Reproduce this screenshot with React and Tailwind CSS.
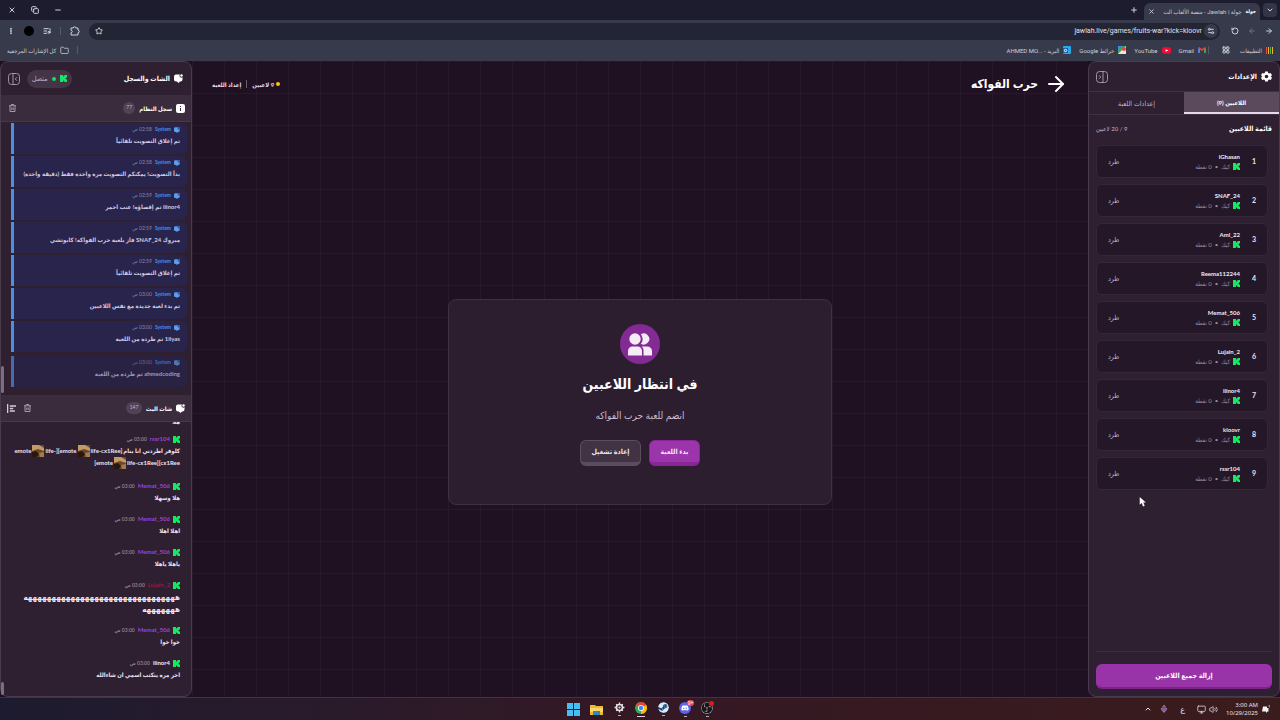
import {
  ArrowLeft,
  ArrowRight,
  ChevronDown,
  ChevronUp,
  Copy,
  EllipsisVertical,
  Folder,
  LayoutGrid,
  ListMusic,
  Mic,
  Minus,
  Monitor,
  Plus,
  RotateCw,
  Settings2,
  Star,
  Volume2,
  X,
} from "lucide-react";
import { FaDiscord, FaSteam } from "react-icons/fa";
import { SiObsstudio } from "react-icons/si";

const players = ["iGhasan", "SNAF_24", "Aml_22", "Reema112244", "Memat_506", "Lujain_2", "iiinor4", "kloovr", "rssr104"];

const systemLog = [
  { time: "02:58", text: "تم إغلاق التصويت تلقائياً" },
  { time: "02:58", text: "بدأ التصويت! يمكنكم التصويت مرة واحدة فقط (دقيقة واحدة)" },
  { time: "02:59", text: "iiinor4 تم إقصاؤه! عنب احمر" },
  { time: "02:59", text: "مبروك SNAF_24 فاز بلعبة حرب الفواكه! كابوتشي" },
  { time: "02:59", text: "تم إغلاق التصويت تلقائياً" },
  { time: "03:00", text: "تم بدء لعبة جديدة مع نفس اللاعبين" },
  { time: "03:00", text: "1ilyas تم طرده من اللعبة" },
];

const chat = [
  { name: "Memat_506", color: "text-[#9a42d8]", lines: ["هلا وسهلا"] },
  { name: "Memat_506", color: "text-[#9a42d8]", lines: ["اهلا اهلا"] },
  { name: "Memat_506", color: "text-[#9a42d8]", lines: ["ياهلا ياهلا"] },
  {
    name: "Lujain_2",
    color: "text-[#a01440]",
    lines: ["ههههههههههههههههههههههههههههههههه", "هههههههه"],
    size: "text-[8px]",
  },
  { name: "Memat_506", color: "text-[#9a42d8]", lines: ["خوا خوا"] },
  { name: "iiinor4", color: "text-[#f3e6f3]", lines: ["اخر مره ينكتب اسمي ان شاءالله"] },
];

const KickIcon = () => (
  <svg viewBox="0 0 14 14" className="size-[7px] shrink-0" fill="#17e862" aria-hidden="true">
    <path d="M0 0h6v3h1.500V1.500H9V0h5v5h-2v1.500h-1.500v1H12V9h2v5H9v-1.500H7.500V11H6v3H0z" />
  </svg>
);

const ChatIcon = ({ className }) => (
  <svg viewBox="0 0 18 18" className={`shrink-0 ${className}`} fill="currentColor" aria-hidden="true">
    <path d="M4 1h8a3.500 3.500 0 0 0 5 5v5a4 4 0 0 1-4 4h-1l-3 3-3-3H4a4 4 0 0 1-4-4V5a4 4 0 0 1 4-4z" />
    <circle cx="15" cy="3" r="2.500" />
  </svg>
);

const InfoIcon = () => (
  <svg viewBox="0 0 18 18" className="size-[9px] shrink-0" aria-hidden="true">
    <rect width="18" height="18" rx="4" fill="#fff" />
    <path d="M9 8v6M9 4v2" stroke="#3a2a3c" strokeWidth="2" />
  </svg>
);

const TrashIcon = () => (
  <svg viewBox="0 0 14 16" className="h-2 w-[7px]" fill="none" stroke="#a999aa" strokeWidth="2" aria-hidden="true">
    <path d="M0 3.500h14M4.500 3V1h5v2M2 4v11h10V4M5.500 7v5M8.500 7v5" />
  </svg>
);

const GearIcon = () => (
  <svg viewBox="0 0 24 24" className="size-[11px] shrink-0" fill="#fff" aria-hidden="true">
    <path
      fillRule="evenodd"
      d="M9 1h6l.7 3.500 2 1.200L21.200 4.500l2.800 5-2.700 2.400v.2l2.700 2.400-2.800 5-3.500-1.200-2 1.200L15 23H9l-.7-3.500-2-1.200-3.500 1.200-2.800-5 2.700-2.400v-.2L0 9.500l2.800-5 3.500 1.200 2-1.200zM12 8a4 4 0 1 0 0 8 4 4 0 0 0 0-8z"
    />
  </svg>
);

const PuzzleIcon = () => (
  <svg viewBox="0 0 20 20" className="size-[10px]" fill="none" stroke="currentColor" strokeWidth="2" aria-hidden="true">
    <path d="M2 4h4.500a2.500 2.500 0 0 1 5 0H16v4.500a2.500 2.500 0 0 1 0 5V18H2v-4.500a2.500 2.500 0 0 0 0-5z" />
  </svg>
);

const PanelIcon = ({ flip }) => (
  <svg
    viewBox="0 0 24 24"
    className={`size-3 ${flip ? "-scale-x-100" : ""}`}
    fill="none"
    stroke="#a493a6"
    strokeWidth="2"
    aria-hidden="true"
  >
    <rect x="1" y="1" width="22" height="22" rx="6" />
    <path d="M10 1v22M18 8.500 14.500 12l3.500 3.500" />
  </svg>
);

const UsersIcon = () => (
  <svg viewBox="0 0 24 23" className="h-[23px] w-6" fill="#f6ecf8" aria-hidden="true">
    <circle cx="7" cy="6" r="5.700" />
    <path d="M12.800 1.200a5.600 5.600 0 1 1 0 9.600 7 7 0 0 0 0-9.600z" />
    <path d="M0 22.500V18a4.500 4.500 0 0 1 4.500-4.500h5A4.500 4.500 0 0 1 14 18v4.500z" />
    <path d="M13.800 13.500H19A5 5 0 0 1 24 18v4.500h-8.500V18a6 6 0 0 0-1.700-4.500z" />
  </svg>
);

const Emote = () => (
  <svg viewBox="0 0 12 12" className="size-3 shrink-0" role="img" aria-label="emote">
    <rect width="12" height="12" fill="#6e4727" />
    <path d="M0 0h7l5 3v3L6 4 0 6z" fill="#c49a68" />
    <path d="M0 7l4-1 3 3-2 3H0z" fill="#281910" />
    <path d="M7 8l5-1v5H8z" fill="#a8794a" />
  </svg>
);

const Browser = () => (
  <header className="shrink-0 font-['Roboto','DejaVu_Sans_Condensed','DejaVu_Sans',sans-serif] text-[#cdd0dc]">
    <div className="flex h-5 items-end bg-[#1d1c2e] pr-[3px] pl-2">
      <button aria-label="البحث في علامات التبويب" className="mb-[3px] flex size-[14px] items-center justify-center rounded bg-[#343547]">
        <ChevronDown className="size-2" strokeWidth={3} />
      </button>
      <div className="mr-[3px] flex h-[17px] w-[116px] items-center gap-1 rounded-t-md bg-[#373a4b] px-1">
        <span className="text-[5px] font-bold text-white">جولة</span>
        <span className="flex-1 text-[6px] whitespace-nowrap">جولة | Jawlah - منصة الألعاب الت</span>
        <button aria-label="إغلاق علامة التبويب"><X className="size-[7px]" strokeWidth={3} /></button>
      </div>
      <button aria-label="علامة تبويب جديدة" className="mr-[6px] mb-[6px]"><Plus className="size-2" strokeWidth={3} /></button>
      <div className="mr-auto mb-[6px] flex items-center gap-[15px]">
        <button aria-label="تصغير"><Minus className="size-2" strokeWidth={3} /></button>
        <button aria-label="استعادة"><Copy className="size-2 -scale-x-100 -rotate-90" strokeWidth={3} /></button>
        <button aria-label="إغلاق"><X className="size-2" strokeWidth={3} /></button>
      </div>
    </div>
    <div className="flex h-[22px] items-center gap-[9px] bg-[#373a4b] px-[7px]">
      <button aria-label="رجوع"><ArrowRight className="size-2" strokeWidth={3} /></button>
      <button aria-label="التالي" className="text-[#6d7080]"><ArrowLeft className="size-2" strokeWidth={3} /></button>
      <button aria-label="إعادة تحميل"><RotateCw className="size-2 -scale-x-100" strokeWidth={3} /></button>
      <div className="mr-[2px] flex h-[17px] flex-1 items-center rounded-full bg-[#232434] pr-[2px] pl-[6px]">
        <span className="flex size-[14px] items-center justify-center rounded-full bg-[#373a4b]">
          <Settings2 className="size-2" strokeWidth={3} />
        </span>
        <input
          dir="ltr"
          aria-label="شريط العناوين"
          defaultValue="jawlah.live/games/fruits-war?kick=kloovr"
          className="mr-[2px] min-w-0 flex-1 bg-transparent text-right text-[7px] text-[#e2e3ec] outline-none"
        />
        <button aria-label="إضافة إشارة"><Star className="size-2" strokeWidth={3} /></button>
      </div>
      <button aria-label="الإضافات"><PuzzleIcon /></button>
      <span className="h-2 w-px bg-[#575a6b]" />
      <button aria-label="الوسائط"><ListMusic className="size-2" strokeWidth={3} /></button>
      <button aria-label="الملف الشخصي" className="size-[10px] rounded-full bg-black" />
      <button aria-label="القائمة"><EllipsisVertical className="size-2" strokeWidth={4} /></button>
    </div>
    <nav className="flex h-[19px] items-center bg-[#373a4b] px-[7px] pb-[3px] text-[6px] whitespace-nowrap">
      <a href="#apps" className="flex items-center gap-1">
        <svg viewBox="0 0 7 7" className="size-[7px]" aria-hidden="true">
          <path d="M0 0h1v7H0z" fill="#e94b3c" />
          <path d="M2 0h1v7H2zM6 0h1v7H6z" fill="#f0b429" />
          <path d="M4 0h1v7H4z" fill="#4caf50" />
        </svg>
        التطبيقات
      </a>
      <button aria-label="مجموعات علامات التبويب" className="mr-[10px]"><LayoutGrid className="size-2" strokeWidth={3} /></button>
      <span className="mr-[13px] h-2 w-px bg-[#575a6b]" />
      <a href="#gmail" className="mr-[2px] flex items-center gap-1">
        <svg viewBox="0 0 8 6" className="h-[6px] w-2" aria-hidden="true">
          <path d="M0 6V1l2 1v4z" fill="#4285f4" />
          <path d="M6 6V2l2-1v5z" fill="#34a853" />
          <path d="M0 1l1-1 3 2 3-2 1 1-4 3z" fill="#ea4335" />
        </svg>
        Gmail
      </a>
      <a href="#youtube" className="mr-2 flex items-center gap-1">
        <svg viewBox="0 0 10 7" className="h-[7px] w-[9px]" aria-hidden="true">
          <rect width="10" height="7" rx="2" fill="#f00c36" />
          <path d="M4 2l3 1.500L4 5z" fill="#fff" />
        </svg>
        YouTube
      </a>
      <a href="#maps" className="mr-2 flex items-center gap-1">
        <svg viewBox="0 0 8 8" className="size-2" aria-hidden="true">
          <rect width="8" height="8" fill="#34a853" />
          <path d="M0 8l8-8v8z" fill="#dfe6ee" />
          <path d="M0 0h4L0 4z" fill="#4285f4" />
          <circle cx="6" cy="3" r="2" fill="#ea4335" />
        </svg>
        خرائط Google
      </a>
      <a href="#mail" className="mr-2 flex items-center gap-1">
        <svg viewBox="0 0 8 8" className="size-2" aria-hidden="true">
          <rect width="8" height="8" rx="1" fill="#2aa8ea" />
          <rect y="2" width="5" height="5" fill="#0b62ad" />
          <circle cx="2.500" cy="4.500" r="1.200" fill="none" stroke="#fff" />
        </svg>
        <span>البريد - <bdi>AHMED MO...</bdi></span>
      </a>
      <a href="#bookmarks" className="mr-auto flex items-center gap-1">
        <span className="ml-1 h-2 w-px bg-[#575a6b]" />
        <Folder className="size-[9px]" strokeWidth={2} />
        كل الإشارات المرجعية
      </a>
    </nav>
  </header>
);

const PlayerRow = ({ name, index }) => (
  <li className="flex h-[33px] items-center rounded-md border border-[#35263a] bg-[#241728] px-[11px]">
    <span className="w-[6px] text-[7px] font-bold text-[#efe3f0]">{index}</span>
    <div className="mr-[10px] flex flex-1 flex-col">
      <span className="text-[6px] leading-[10px] font-bold text-[#f2e8f3]">{name}</span>
      <span className="flex items-center gap-[3px] text-[6px] leading-[10px] text-[#9c8b9f]">
        <KickIcon />
        <span>كيك</span>
        <span>•</span>
        <span>0 نقطة</span>
      </span>
    </div>
    <button className="text-[7px] text-[#c4b4c6]">طرد</button>
  </li>
);

const SettingsPanel = () => (
  <aside className="flex w-48 shrink-0 flex-col overflow-hidden rounded-lg border border-[#4a3a4d] bg-[#2e1f31]">
    <div className="flex h-[29px] items-center gap-1 px-[7px]">
      <GearIcon />
      <h2 className="flex-1 text-[7px] font-bold text-white">الإعدادات</h2>
      <button aria-label="طي الإعدادات"><PanelIcon flip /></button>
    </div>
    <div role="tablist" className="flex h-6 border-y border-[#3f3043] text-[7px]">
      <button role="tab" aria-selected="true" className="flex-1 border-b-2 border-[#e6dae8] bg-[#5a4a5c] text-[6px] font-bold text-white">
        اللاعبين (9)
      </button>
      <button role="tab" aria-selected="false" className="flex-1 text-[#c4b4c6]">إعدادات اللعبة</button>
    </div>
    <div className="mb-[3px] flex h-[27px] items-center justify-between px-[7px]">
      <h3 className="text-[7px] font-bold text-white">قائمة اللاعبين</h3>
      <span className="text-[6px] text-[#c4b4c6]">9 / 20 لاعبين</span>
    </div>
    <ul className="flex flex-1 flex-col gap-[6px] pr-[11px] pl-[7px]">
      {players.map((name, i) => (
        <PlayerRow key={name} name={name} index={i + 1} />
      ))}
    </ul>
    <div className="mx-[7px] border-t border-[#3a2b3e] pt-2 pb-[7px]">
      <button className="h-[25px] w-full rounded-md border-b-2 border-[#7d248c] bg-[#9933a8] text-[7px] font-bold text-white">
        إزالة جميع اللاعبين
      </button>
    </div>
  </aside>
);

const LogEntry = ({ entry, faded }) => (
  <li
    className={`flex h-[31px] shrink-0 flex-col rounded-r-md border-l-[3px] border-[#4f8fe0] bg-[#28244c] pt-px pr-[7px] ${
      faded ? "mt-[2px] opacity-70" : ""
    }`}
  >
    <p className="flex items-center gap-[3px] text-[5px] leading-[11px]">
      <ChatIcon className="size-[6px] text-[#5b9df0]" />
      <span className="font-bold text-[#4d8ee0]">System</span>
      <span className="text-[#8f86a6]">{entry.time} ص</span>
    </p>
    <p className="text-[6px] leading-3 font-bold whitespace-nowrap text-[#cfc9e2]">{entry.text}</p>
  </li>
);

const ChatName = ({ name, color }) => (
  <p className="flex items-center gap-[3px] text-[6px] leading-3">
    <KickIcon />
    <span className={`font-bold ${color}`}>{name}</span>
    <span className="text-[5px] text-[#8d7d90]">03:00 ص</span>
  </p>
);

const ChatPanel = () => (
  <aside className="flex w-48 shrink-0 flex-col overflow-hidden rounded-lg border border-[#4a3a4d] bg-[#2e1f31]">
    <div className="flex h-[33px] shrink-0 items-center gap-1 pr-2 pl-[7px]">
      <ChatIcon className="size-[9px] text-white" />
      <h2 className="flex-1 text-[7px] font-bold text-white">الشات والسجل</h2>
      <span className="ml-[3px] flex h-[18px] items-center gap-1 rounded-full bg-[#433446] px-[5px] text-[7px] text-[#c4b4c6]">
        <KickIcon />
        <span className="size-1 rounded-full bg-[#19dc67]" />
        متصل
      </span>
      <button aria-label="طي الشات"><PanelIcon /></button>
    </div>
    <div className="flex h-[27px] shrink-0 items-center gap-1 border-b border-[#49384c] bg-[#3a2b3d] pr-[6px] pl-2">
      <InfoIcon />
      <h3 className="text-[6px] font-bold text-white">سجل النظام</h3>
      <span className="flex size-3 items-center justify-center rounded-full bg-[#514255] text-[5px] text-[#c4b4c6]">77</span>
      <button aria-label="مسح السجل" className="mr-auto"><TrashIcon /></button>
    </div>
    <ul className="flex h-[273px] shrink-0 flex-col justify-end gap-[2px] overflow-hidden pr-1 pb-2 pl-[10px]">
      {systemLog.map((entry, i) => (
        <LogEntry key={i} entry={entry} />
      ))}
      <LogEntry entry={{ time: "03:00", text: "ahmedcoding تم طرده من اللعبة" }} faded />
    </ul>
    <div className="flex h-[27px] shrink-0 items-center gap-1 border-b border-[#49384c] bg-[#3a2b3d] pr-[6px] pl-[6px]">
      <ChatIcon className="size-[9px] text-white" />
      <h3 className="text-[6px] font-bold text-white">شات البث</h3>
      <span className="flex h-3 w-4 items-center justify-center rounded-full bg-[#514255] text-[5px] text-[#c4b4c6]">147</span>
      <button aria-label="مسح الشات" className="mr-auto ml-1"><TrashIcon /></button>
      <button aria-label="محاذاة">
        <svg viewBox="0 0 16 16" className="size-[9px]" stroke="#d9cbdb" strokeWidth="2.500" aria-hidden="true">
          <path d="M1 0v16M5 3.500h11M5 8h6M5 12.500h9" />
        </svg>
      </button>
    </div>
    <ul className="flex min-h-0 flex-1 flex-col justify-end gap-[9px] overflow-hidden pr-[11px] pb-[15px] pl-[10px] text-[6px] leading-3 font-bold text-[#efe3f0]">
      <li className="-mb-1 shrink-0">هلا</li>
      <li className="shrink-0 pb-[2px]">
        <ChatName name="rssr104" color="text-[#9a42d8]" />
        <p className="flex items-center gap-px whitespace-nowrap">
          <span>كلوفر اطردني انا بنام</span>
          <bdo dir="ltr">life-cx1Ree]</bdo>
          <Emote />
          <bdo dir="ltr">life-][emote</bdo>
          <Emote />
          <bdo dir="ltr">emote</bdo>
        </p>
        <p className="flex items-center gap-px whitespace-nowrap">
          <bdo dir="ltr">life-cx1Ree][cx1Ree</bdo>
          <Emote />
          <bdo dir="ltr">[emote</bdo>
        </p>
      </li>
      {chat.map((message, i) => (
        <li key={i} className="shrink-0">
          <ChatName name={message.name} color={message.color} />
          {message.lines.map((line) => (
            <p key={line} className={`leading-3 whitespace-nowrap ${message.size ?? ""}`}>{line}</p>
          ))}
        </li>
      ))}
    </ul>
    <span className="absolute bottom-[304px] left-px h-[27px] w-[3px] rounded bg-[#7d6d80]" />
    <span className="absolute bottom-[2px] left-px h-[13px] w-[3px] rounded bg-[#7d6d80]" />
  </aside>
);

const GameArea = () => (
  <main className="flex min-w-0 flex-1 flex-col bg-[#1f1022] bg-[linear-gradient(to_right,#27182b_1px,transparent_1px),linear-gradient(to_bottom,#27182b_1px,transparent_1px)] bg-size-[32px_32px]">
    <div className="flex h-[46px] shrink-0 items-center px-5">
      <button aria-label="رجوع" className="ml-[6px]"><ArrowRight className="size-6 text-white" strokeWidth={2} /></button>
      <h1 className="ml-auto text-[12px] font-bold text-white">حرب الفواكه</h1>
      <p className="flex items-center gap-[5px] text-[6px] font-bold text-[#e9dcea]">
        <span className="flex items-center gap-[2px]">
          <span className="size-1 rounded-full bg-[#f5c51a]" />
          9 لاعبين
        </span>
        <span className="h-2 w-px bg-[#6d5d70]" />
        <span>إعداد اللعبة</span>
      </p>
    </div>
    <div className="flex flex-1 items-center justify-center">
      <section className="flex w-96 flex-col items-center rounded-lg border border-[#3f3043] bg-[#2c1e2f] pt-6 pb-[38px]">
        <span className="flex size-10 items-center justify-center rounded-full bg-[#832a94]"><UsersIcon /></span>
        <h2 className="mt-2 text-[14px] leading-6 font-bold text-white">في انتظار اللاعبين</h2>
        <p className="mt-[10px] text-[10px] leading-[18px] text-[#cbbccd]">انضم للعبة حرب الفواكه</p>
        <div className="mt-4 flex gap-2 text-[7px] font-bold">
          <button className="h-[26px] w-[51px] rounded-md border border-b-4 border-[#862795] bg-[#9c35ac] text-[#f7e4f9]">بدء اللعبة</button>
          <button className="h-[26px] w-[61px] rounded-md border border-b-4 border-[#5c4c5f] bg-[#413244] text-[#efe3f0]">إعادة تشغيل</button>
        </div>
      </section>
    </div>
  </main>
);

const ChromeLogo = () => (
  <svg viewBox="0 0 24 24" className="size-3" aria-hidden="true">
    <circle cx="12" cy="12" r="12" fill="#34a853" />
    <path d="M12 12 1.600 6A12 12 0 0 1 22.400 6z" fill="#ea4335" />
    <path d="M12 12 22.400 6A12 12 0 0 1 12 24z" fill="#fbbc05" />
    <circle cx="12" cy="12" r="6" fill="#fff" />
    <circle cx="12" cy="12" r="4.500" fill="#4285f4" />
  </svg>
);

const Taskbar = () => (
  <footer
    dir="ltr"
    className="flex h-[23px] shrink-0 items-center border-t border-[#44333f] bg-linear-to-r from-[#1d1b30] via-[#341824] to-[#3a1c1c] font-['Noto_Sans','DejaVu_Sans',sans-serif] text-[#e6e2ea]"
  >
    <div className="flex-1 pr-[10px]" />
    <div className="flex items-center gap-[10px]">
      <button aria-label="Start">
        <svg viewBox="0 0 13 13" className="size-[13px]" fill="#45bff2" aria-hidden="true">
          <path d="M0 0h6v6H0zM7 0h6v6H7zM0 7h6v6H0zM7 7h6v6H7z" />
        </svg>
      </button>
      <button aria-label="File Explorer">
        <svg viewBox="0 0 13 11" className="h-[11px] w-[13px]" aria-hidden="true">
          <path d="M0 1h5l1 1h7v9H0z" fill="#f2b632" />
          <path d="M0 4h13v4H0z" fill="#fbd765" />
          <path d="M3 7h7v4H3z" fill="#2b89c9" />
        </svg>
      </button>
      <button aria-label="Settings" className="flex w-3 flex-col items-center gap-[2px]">
        <svg viewBox="0 0 20 20" className="size-[11px]" fill="none" stroke="#e6e2ea" aria-hidden="true">
          <circle cx="10" cy="10" r="5.500" strokeWidth="3" />
          <path d="M10 1v4M10 15v4M1 10h4M15 10h4M4 4l2 2M14 14l2 2M16 4l-2 2M4 16l2-2" strokeWidth="2.500" />
          <circle cx="10" cy="10" r="2" fill="#e6e2ea" stroke="none" />
        </svg>
        <span className="h-px w-[3px] bg-[#b8aebb]" />
      </button>
      <button aria-label="Chrome" className="flex flex-col items-center gap-[2px]">
        <ChromeLogo />
        <span className="h-px w-2 bg-[#e6d0dc]" />
      </button>
      <button aria-label="Steam" className="flex w-3 flex-col items-center gap-[2px]">
        <FaSteam className="size-[11px] rounded-full bg-[#10436e] text-[#dcebf5]" />
        <span className="h-px w-[3px] bg-[#b8aebb]" />
      </button>
      <button aria-label="Discord" className="relative flex flex-col items-center gap-[2px]">
        <span className="flex size-3 items-center justify-center rounded-full bg-[#5b63ea]"><FaDiscord className="size-2 text-white" /></span>
        <span className="h-px w-[3px] bg-[#b8aebb]" />
        <span className="absolute -top-[2px] -right-[3px] h-[6px] w-[7px] rounded-full bg-[#e8455c] text-center text-[5px] leading-[6px] text-white">9+</span>
      </button>
      <button aria-label="OBS" className="relative flex flex-col items-center gap-[2px]">
        <SiObsstudio className="size-3 rounded-full bg-[#18161a] text-[#cfc9d2]" />
        <span className="h-px w-[3px] bg-[#b8aebb]" />
        <span className="absolute -top-px -right-px size-[5px] rounded-full bg-[#e01919]" />
      </button>
    </div>
    <div className="flex flex-1 items-center justify-end gap-2 pr-[10px]">
      <button aria-label="Hidden icons"><ChevronUp className="size-2" strokeWidth={3} /></button>
      <Mic className="size-2 text-[#b98bd0]" strokeWidth={3} />
      <button className="mx-1 text-[8px] leading-3">ع</button>
      <span className="flex gap-[3px]">
        <Monitor className="size-[9px]" strokeWidth={2} />
        <Volume2 className="size-[9px]" strokeWidth={2} />
      </span>
      <div className="flex items-center gap-1">
        <p className="text-right text-[6px] leading-2">3:00 AM<br />10/29/2025</p>
        <svg viewBox="0 0 16 16" className="size-2" fill="#f2eef4" aria-hidden="true">
          <path d="M2 3h8v3h3v7h-2l-3 3v-3H0z" />
          <path d="M12 0h3l-1 4h2" stroke="#f2eef4" fill="none" />
        </svg>
      </div>
    </div>
  </footer>
);

export default function App() {
  return (
    <div
      dir="rtl"
      className="relative flex h-screen flex-col overflow-hidden bg-[#1f1022] font-['Lato','DejaVu_Sans_Condensed','DejaVu_Sans',sans-serif]"
    >
      <Browser />
      <div className="relative flex min-h-0 flex-1">
        <SettingsPanel />
        <GameArea />
        <ChatPanel />
      </div>
      <Taskbar />
      <svg viewBox="0 0 12 18" className="pointer-events-none absolute top-[69%] left-[89%] h-[10px] w-[7px]" aria-hidden="true">
        <path d="M1 0v14l3.500-3 2.500 6 3-1.200L7.500 10H12z" fill="#fff" />
      </svg>
    </div>
  );
}
